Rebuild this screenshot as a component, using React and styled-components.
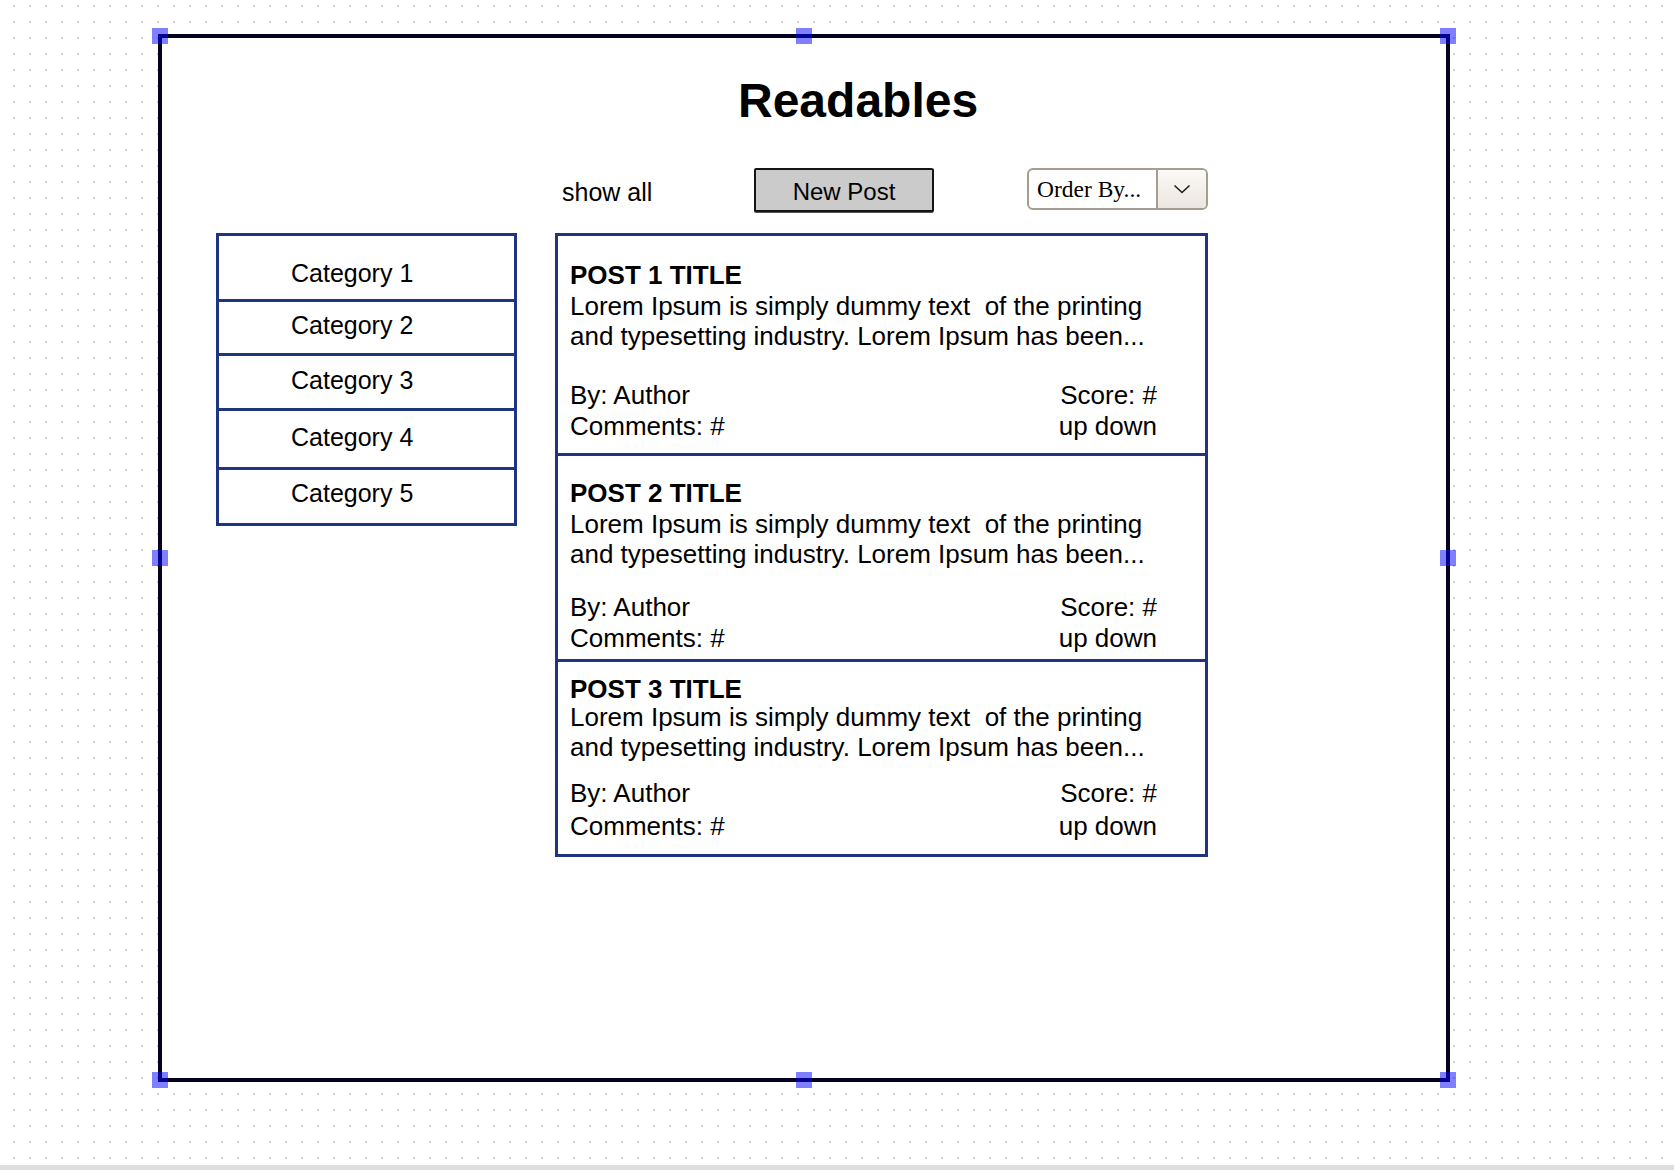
import React from 'react';
import styled, {createGlobalStyle} from 'styled-components';

const GlobalStyle = createGlobalStyle`
  html, body {
    margin: 0;
    padding: 0;
  }
  body {
    font-family: "Liberation Sans", Arial, sans-serif;
    color: #000;
  }
`;

const NAVY = '#1f3583';

const Page = styled.div`
  height: 100vh;
  display: flex;
  flex-direction: column;
`;

const Workspace = styled.div`
  flex: 1;
  padding: 34px 0 0 158px;
  background-color: #fff;
  background-image: radial-gradient(circle at center, #cfcfcf 0 1px, transparent 1.4px);
  background-size: 16px 16px;
  background-position: 6px 14px;
`;

const BottomBar = styled.div`
  height: 5px;
  background: #dedede;
`;

const Frame = styled.div`
  position: relative;
  box-sizing: border-box;
  width: 1292px;
  height: 1048px;
  border: 4px solid #03031f;
  background: #fff;
  display: flex;
  flex-direction: column;
`;

/* selection handles sit over the frame border */
const Handle = styled.span`
  position: absolute;
  width: 16px;
  height: 16px;
  background: rgba(0, 0, 255, 0.5);
  left: ${p => p.$x === 'l' ? '-10px' : p.$x === 'm' ? 'calc(50% - 8px)' : 'auto'};
  right: ${p => p.$x === 'r' ? '-10px' : 'auto'};
  top: ${p => p.$y === 't' ? '-10px' : p.$y === 'm' ? 'calc(50% - 8px)' : 'auto'};
  bottom: ${p => p.$y === 'b' ? '-10px' : 'auto'};
`;

const Title = styled.h1`
  margin: 35px 0 0 0;
  padding-left: 576px;
  font-size: 48px;
  line-height: 56px;
  font-weight: bold;
`;

const Toolbar = styled.div`
  display: flex;
  align-items: flex-start;
  margin-top: 39px;
  padding-left: 400px;
  height: 44px;
`;

const ShowAll = styled.a`
  width: 192px;
  margin-top: 6px;
  font-size: 25px;
  line-height: 36px;
  color: #000;
  cursor: pointer;
`;

const NewPostButton = styled.button`
  box-sizing: border-box;
  width: 180px;
  height: 44px;
  padding: 3px 0 0;
  border: 2px solid #141414;
  border-radius: 2px 3px 2px 3px / 3px 2px 3px 2px;
  background: #cbcbcb;
  font-family: "Liberation Sans", Arial, sans-serif;
  font-size: 24px;
  color: #000;
  box-shadow: 0 1px 0 #555;
`;

const Select = styled.div`
  box-sizing: border-box;
  display: flex;
  width: 181px;
  height: 42px;
  margin-left: 93px;
  border: 2px solid #a59d8f;
  border-radius: 6px;
  overflow: hidden;
  background: #fff;
`;

const SelectLabel = styled.span`
  flex: 1;
  padding-left: 8px;
  font-family: "Liberation Serif", "Times New Roman", serif;
  font-size: 23.5px;
  line-height: 38px;
  border-right: 2px solid #a59d8f;
`;

const SelectArrow = styled.span`
  width: 48px;
  display: flex;
  align-items: center;
  justify-content: center;
  background: linear-gradient(#fbfaf8, #ebe7df);
`;

const Columns = styled.div`
  display: flex;
  align-items: flex-start;
  gap: 38px;
  margin-top: 21px;
  padding-left: 54px;
`;

const CategoryList = styled.ul`
  list-style: none;
  margin: 0;
  padding: 0;
  width: 301px;
  box-sizing: border-box;
  border: 3px solid ${NAVY};
`;

const CategoryItem = styled.li`
  box-sizing: content-box;
  height: ${p => p.$h - p.$pt}px;
  padding: ${p => p.$pt}px 0 0 72px;
  font-size: 25px;
  line-height: 25px;
  &:not(:first-child) {
    border-top: 3px solid ${NAVY};
  }
`;

const PostList = styled.div`
  width: 653px;
  box-sizing: border-box;
  border: 3px solid ${NAVY};
`;

const Post = styled.article`
  box-sizing: content-box;
  height: ${p => p.$h - p.$pt}px;
  padding: ${p => p.$pt}px 48px 0 12px;
  font-size: 26px;
  &:not(:first-child) {
    border-top: 3px solid ${NAVY};
  }
`;

const PostTitle = styled.h2`
  margin: 0;
  font-size: 26px;
  line-height: 34px;
  font-weight: bold;
`;

const PostBody = styled.p`
  margin: ${p => p.$bt}px 0 0;
  line-height: 29.5px;
  white-space: pre;
`;

const Meta = styled.div`
  display: flex;
  justify-content: space-between;
  margin-top: ${p => p.$mt}px;
  line-height: ${p => p.$lh}px;
`;

const MetaCol = styled.div`
  text-align: ${p => p.$right ? 'right' : 'left'};
`;

const Chevron = () => (
    <svg width="18" height="10" viewBox="0 0 18 10">
        <path d="M1.5 1.5 L9 8.5 L16.5 1.5" fill="none" stroke="#1a1a1a" strokeWidth="1.5"/>
    </svg>
);

const categories = [
    {name: 'Category 1', h: 63, pt: 25},
    {name: 'Category 2', h: 51, pt: 11},
    {name: 'Category 3', h: 52, pt: 12},
    {name: 'Category 4', h: 56, pt: 13.5},
    {name: 'Category 5', h: 53, pt: 10.5}
];

const posts = [
    {title: 'POST 1 TITLE', h: 217, pt: 22, bt: 0, mt: 29, lh: 31},
    {title: 'POST 2 TITLE', h: 203, pt: 20, bt: 0, mt: 22.5, lh: 31},
    {title: 'POST 3 TITLE', h: 192, pt: 10, bt: -3, mt: 15, lh: 33}
];

const handles = [
    ['l', 't'], ['m', 't'], ['r', 't'],
    ['l', 'm'], ['r', 'm'],
    ['l', 'b'], ['m', 'b'], ['r', 'b']
];

export default function App() {
    return (
        <Page>
            <GlobalStyle/>
            <Workspace>
                <Frame>
                    <Title>Readables</Title>
                    <Toolbar>
                        <ShowAll>show all</ShowAll>
                        <NewPostButton>New Post</NewPostButton>
                        <Select>
                            <SelectLabel>Order By...</SelectLabel>
                            <SelectArrow><Chevron/></SelectArrow>
                        </Select>
                    </Toolbar>
                    <Columns>
                        <CategoryList>
                            {categories.map(c => (
                                <CategoryItem key={c.name} $h={c.h} $pt={c.pt}>{c.name}</CategoryItem>
                            ))}
                        </CategoryList>
                        <PostList>
                            {posts.map(p => (
                                <Post key={p.title} $h={p.h} $pt={p.pt}>
                                    <PostTitle>{p.title}</PostTitle>
                                    <PostBody $bt={p.bt}>{'Lorem Ipsum is simply dummy text  of the printing\nand typesetting industry. Lorem Ipsum has been...'}</PostBody>
                                    <Meta $mt={p.mt} $lh={p.lh}>
                                        <MetaCol>
                                            <div>By: Author</div>
                                            <div>Comments: #</div>
                                        </MetaCol>
                                        <MetaCol $right>
                                            <div>Score: #</div>
                                            <div>up down</div>
                                        </MetaCol>
                                    </Meta>
                                </Post>
                            ))}
                        </PostList>
                    </Columns>
                    {handles.map(([x, y]) => <Handle key={x + y} $x={x} $y={y}/>)}
                </Frame>
            </Workspace>
            <BottomBar/>
        </Page>
    );
}
